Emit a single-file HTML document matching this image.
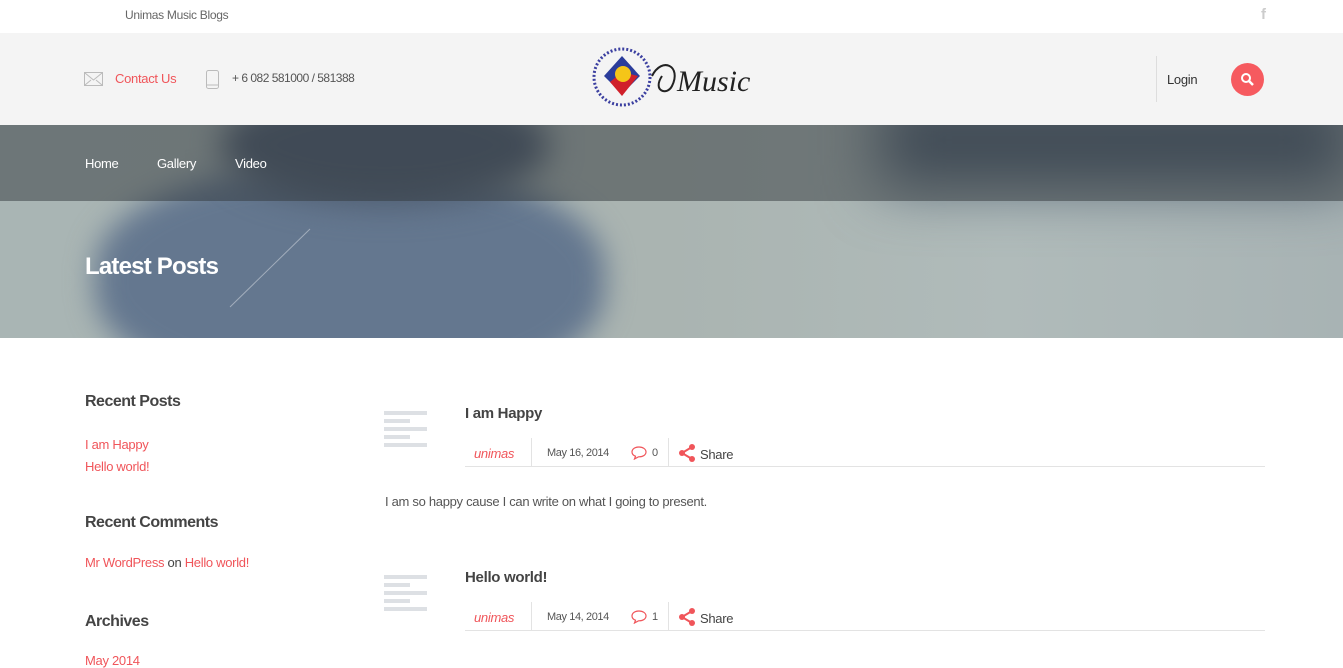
<!DOCTYPE html>
<html><head><style>
*{margin:0;padding:0;box-sizing:border-box}
body{width:1343px;height:660px;overflow:hidden;font-family:"Liberation Sans",sans-serif;background:#fff;position:relative;color:#444}
.a{position:absolute}
.red{color:#f0555a}
.n{letter-spacing:-0.3px}
.doc{width:43px;height:38px;background:linear-gradient(#dde0e4 0 4px,transparent 4px 8px,#dde0e4 8px 12px,transparent 12px 16px,#dde0e4 16px 20px,transparent 20px 24px,#dde0e4 24px 28px,transparent 28px 32px,#dde0e4 32px 36px,transparent 36px)}
.doc i{position:absolute;left:26px;width:17px;height:4px;background:#fff}
</style></head><body>
<div class="a n" style="left:125px;top:8px;font-size:12px;color:#666">Unimas Music Blogs</div>
<div class="a" style="left:1261px;top:6px;font-size:15px;font-weight:bold;color:#ccc">f</div>
<div class="a" style="left:0;top:33px;width:1343px;height:92px;background:#f4f4f4"></div>
<svg class="a" style="left:84px;top:72px" width="19" height="14"><rect x=".5" y=".5" width="18" height="13" fill="none" stroke="#bbb"/><path d="M1 1l8.5 7 8.5-7M1 13l6-5M18 13l-6-5" fill="none" stroke="#bbb"/></svg>
<div class="a red n" style="left:115px;top:71px;font-size:13px">Contact Us</div>
<svg class="a" style="left:206px;top:70px" width="14" height="19"><rect x=".5" y=".5" width="12" height="18" rx="2" fill="none" stroke="#bbb"/><line x1="1" y1="15" x2="12" y2="15" stroke="#bbb"/></svg>
<div class="a n" style="left:232px;top:71px;font-size:12px;color:#555;letter-spacing:-0.5px">+ 6 082 581000 / 581388</div>
<svg class="a" style="left:592px;top:46px" width="166" height="64">
<circle cx="30" cy="31" r="28" fill="none" stroke="#3b3fa0" stroke-width="3" stroke-dasharray="2 2"/>
<path d="M30 10 L48 30 L30 48 L12 30Z" fill="#2b3d9b"/><path d="M30 26 L46 30 L30 50 L18 36Z" fill="#d0202a"/><circle cx="31" cy="28" r="8" fill="#f5c518"/>
<path d="M60 30 C70 10 90 20 80 40 C75 50 60 45 70 30" fill="none" stroke="#222" stroke-width="2"/>
<text x="85" y="45" font-family="Liberation Serif" font-style="italic" font-size="30" fill="#222">Music</text></svg>
<div class="a" style="left:1156px;top:56px;width:1px;height:46px;background:#ddd"></div>
<div class="a n" style="left:1167px;top:72px;font-size:13px;color:#333">Login</div>
<div class="a" style="left:1231px;top:63px;width:33px;height:33px;border-radius:50%;background:#f65a5f"></div>
<svg class="a" style="left:1239px;top:71px" width="17" height="17"><circle cx="7" cy="7" r="4" fill="none" stroke="#fff" stroke-width="2"/><line x1="10" y1="10" x2="14" y2="14" stroke="#fff" stroke-width="2.5"/></svg>
<div class="a" style="left:0;top:125px;width:1343px;height:213px;background:linear-gradient(90deg,#a9b5b4 0%,#aab4b1 50%,#b0bbba 75%,#a8b3b4 100%);overflow:hidden">
<div class="a" style="left:95px;top:40px;width:510px;height:230px;border-radius:45%;background:#64778f;filter:blur(14px)"></div>
<div class="a" style="left:220px;top:-40px;width:330px;height:120px;border-radius:50%;background:#4f5d70;filter:blur(16px)"></div>
<div class="a" style="left:880px;top:-30px;width:470px;height:90px;background:#4c5c6e;filter:blur(30px)"></div>
<div class="a" style="left:0;top:0;width:1343px;height:76px;background:rgba(50,55,60,.5)"></div>
</div>
<div class="a n" style="left:85px;top:156px;font-size:13px;color:#fff">Home</div>
<div class="a n" style="left:157px;top:156px;font-size:13px;color:#fff">Gallery</div>
<div class="a n" style="left:235px;top:156px;font-size:13px;color:#fff">Video</div>
<div class="a" style="left:85px;top:253px;font-size:24px;font-weight:bold;color:#fff;letter-spacing:-0.8px">Latest Posts</div>
<svg class="a" style="left:228px;top:228px" width="84" height="80"><line x1="2" y1="79" x2="82" y2="1" stroke="rgba(255,255,255,.4)"/></svg>
<div class="a" style="left:85px;top:393px;font-size:16px;font-weight:bold;color:#444;letter-spacing:-0.5px">Recent Posts</div>
<div class="a red n" style="left:85px;top:434px;font-size:13px;line-height:22px">I am Happy<br>Hello world!</div>
<div class="a" style="left:85px;top:514px;font-size:16px;font-weight:bold;color:#444;letter-spacing:-0.5px">Recent Comments</div>
<div class="a n" style="left:85px;top:555px;font-size:13px"><span class="red">Mr WordPress</span> on <span class="red">Hello world!</span></div>
<div class="a" style="left:85px;top:613px;font-size:16px;font-weight:bold;color:#444;letter-spacing:-0.5px">Archives</div>
<div class="a red n" style="left:85px;top:653px;font-size:13px">May 2014</div>

<div class="a doc" style="left:384px;top:411px"><i style="top:8px"></i><i style="top:24px"></i></div>
<div class="a" style="left:465px;top:405px;font-size:15px;font-weight:bold;color:#444;letter-spacing:-0.3px">I am Happy</div>
<div class="a" style="left:465px;top:466px;width:800px;height:1px;background:#e3e3e3"></div>
<div class="a" style="left:531px;top:438px;width:1px;height:28px;background:#e3e3e3"></div>
<div class="a" style="left:668px;top:438px;width:1px;height:28px;background:#e3e3e3"></div>
<div class="a red n" style="left:474px;top:446px;font-size:13px;font-style:italic">unimas</div>
<div class="a" style="left:547px;top:447px;font-size:11px;color:#555;letter-spacing:-0.4px">May 16, 2014</div>
<svg class="a" style="left:631px;top:446px" width="16" height="14"><path d="M8 1C4 1 1 3 1 6c0 2 1.5 3.5 3.5 4.2L3.5 13l4-2.2H8c4 0 7-2 7-4.8S12 1 8 1z" fill="none" stroke="#f0555a" stroke-width="1.2"/></svg>
<div class="a" style="left:652px;top:447px;font-size:11px;color:#555">0</div>
<svg class="a" style="left:678px;top:444px" width="18" height="18"><circle cx="4" cy="9" r="3" fill="#f0555a"/><circle cx="14" cy="3" r="3" fill="#f0555a"/><circle cx="14" cy="15" r="3" fill="#f0555a"/><path d="M4 9L14 3M4 9L14 15" stroke="#f0555a" stroke-width="2"/></svg>
<div class="a n" style="left:700px;top:447px;font-size:13px;color:#444">Share</div>
<div class="a n" style="left:385px;top:494px;font-size:13px;color:#555">I am so happy cause I can write on what I going to present.</div>

<div class="a doc" style="left:384px;top:575px"><i style="top:8px"></i><i style="top:24px"></i></div>
<div class="a" style="left:465px;top:569px;font-size:15px;font-weight:bold;color:#444;letter-spacing:-0.3px">Hello world!</div>
<div class="a" style="left:465px;top:630px;width:800px;height:1px;background:#e3e3e3"></div>
<div class="a" style="left:531px;top:602px;width:1px;height:28px;background:#e3e3e3"></div>
<div class="a" style="left:668px;top:602px;width:1px;height:28px;background:#e3e3e3"></div>
<div class="a red n" style="left:474px;top:610px;font-size:13px;font-style:italic">unimas</div>
<div class="a" style="left:547px;top:611px;font-size:11px;color:#555;letter-spacing:-0.4px">May 14, 2014</div>
<svg class="a" style="left:631px;top:610px" width="16" height="14"><path d="M8 1C4 1 1 3 1 6c0 2 1.5 3.5 3.5 4.2L3.5 13l4-2.2H8c4 0 7-2 7-4.8S12 1 8 1z" fill="none" stroke="#f0555a" stroke-width="1.2"/></svg>
<div class="a" style="left:652px;top:611px;font-size:11px;color:#555">1</div>
<svg class="a" style="left:678px;top:608px" width="18" height="18"><circle cx="4" cy="9" r="3" fill="#f0555a"/><circle cx="14" cy="3" r="3" fill="#f0555a"/><circle cx="14" cy="15" r="3" fill="#f0555a"/><path d="M4 9L14 3M4 9L14 15" stroke="#f0555a" stroke-width="2"/></svg>
<div class="a n" style="left:700px;top:611px;font-size:13px;color:#444">Share</div>
</body></html>
